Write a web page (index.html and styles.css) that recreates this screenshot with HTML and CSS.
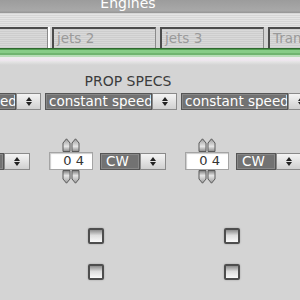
FILE: index.html
```html
<!DOCTYPE html>
<html lang="en">
<head>
  <meta charset="UTF-8">
  <title>Engines</title>
  <link rel="stylesheet" href="styles.css">
</head>
<body>
  <div class="titlebar"><span class="title">Engines</span></div>
  <div class="strip"></div>
  <div class="tabs">
    <div class="tab">jets 1</div>
    <div class="tab">jets 2</div>
    <div class="tab">jets 3</div>
    <div class="tab">Transmission</div>
  </div>
  <div class="accent"></div>
  <div class="sheen"></div>

  <h2 class="heading">PROP SPECS</h2>

  <!-- governor type, one per engine -->
  <div class="select-row">
    <div class="select">
      <div class="box">constant speed</div>
      <div class="btn"><svg width="6" height="9" viewBox="0 0 6 9"><path d="M0 4L3 0L6 4ZM0 5H6L3 9Z" fill="#222"/></svg></div>
    </div>
    <div class="select">
      <div class="box">constant speed</div>
      <div class="btn"><svg width="6" height="9" viewBox="0 0 6 9"><path d="M0 4L3 0L6 4ZM0 5H6L3 9Z" fill="#222"/></svg></div>
    </div>
    <div class="select">
      <div class="box">constant speed</div>
      <div class="btn"><svg width="6" height="9" viewBox="0 0 6 9"><path d="M0 4L3 0L6 4ZM0 5H6L3 9Z" fill="#222"/></svg></div>
    </div>
  </div>

  <!-- blade count + rotation -->
  <div class="prop-row">
    <div class="prop">
      <div class="num">
        <div class="arrows">
          <svg width="9" height="14" viewBox="0 0 9 14"><path d="M1 13.5V5L4.5 0.8L8 5V13.5Z" fill="url(#ga)" stroke="#5a5a5a"/></svg>
          <svg width="9" height="14" viewBox="0 0 9 14"><path d="M1 13.5V5L4.5 0.8L8 5V13.5Z" fill="url(#ga)" stroke="#5a5a5a"/></svg>
        </div>
        <div class="field">0 4</div>
        <div class="arrows">
          <svg width="9" height="14" viewBox="0 0 9 14"><path d="M1 0.5V9L4.5 13.2L8 9V0.5Z" fill="url(#gb)" stroke="#5a5a5a"/></svg>
          <svg width="9" height="14" viewBox="0 0 9 14"><path d="M1 0.5V9L4.5 13.2L8 9V0.5Z" fill="url(#gb)" stroke="#5a5a5a"/></svg>
        </div>
      </div>
      <div class="select small">
        <div class="box">CW</div>
        <div class="btn"><svg width="6" height="9" viewBox="0 0 6 9"><path d="M0 4L3 0L6 4ZM0 5H6L3 9Z" fill="#222"/></svg></div>
      </div>
    </div>
    <div class="prop">
      <div class="num">
        <div class="arrows">
          <svg width="9" height="14" viewBox="0 0 9 14"><path d="M1 13.5V5L4.5 0.8L8 5V13.5Z" fill="url(#ga)" stroke="#5a5a5a"/></svg>
          <svg width="9" height="14" viewBox="0 0 9 14"><path d="M1 13.5V5L4.5 0.8L8 5V13.5Z" fill="url(#ga)" stroke="#5a5a5a"/></svg>
        </div>
        <div class="field">0 4</div>
        <div class="arrows">
          <svg width="9" height="14" viewBox="0 0 9 14"><path d="M1 0.5V9L4.5 13.2L8 9V0.5Z" fill="url(#gb)" stroke="#5a5a5a"/></svg>
          <svg width="9" height="14" viewBox="0 0 9 14"><path d="M1 0.5V9L4.5 13.2L8 9V0.5Z" fill="url(#gb)" stroke="#5a5a5a"/></svg>
        </div>
      </div>
      <div class="select small">
        <div class="box">CW</div>
        <div class="btn"><svg width="6" height="9" viewBox="0 0 6 9"><path d="M0 4L3 0L6 4ZM0 5H6L3 9Z" fill="#222"/></svg></div>
      </div>
    </div>
    <div class="prop">
      <div class="num">
        <div class="arrows">
          <svg width="9" height="14" viewBox="0 0 9 14"><path d="M1 13.5V5L4.5 0.8L8 5V13.5Z" fill="url(#ga)" stroke="#5a5a5a"/></svg>
          <svg width="9" height="14" viewBox="0 0 9 14"><path d="M1 13.5V5L4.5 0.8L8 5V13.5Z" fill="url(#ga)" stroke="#5a5a5a"/></svg>
        </div>
        <div class="field">0 4</div>
        <div class="arrows">
          <svg width="9" height="14" viewBox="0 0 9 14"><path d="M1 0.5V9L4.5 13.2L8 9V0.5Z" fill="url(#gb)" stroke="#5a5a5a"/></svg>
          <svg width="9" height="14" viewBox="0 0 9 14"><path d="M1 0.5V9L4.5 13.2L8 9V0.5Z" fill="url(#gb)" stroke="#5a5a5a"/></svg>
        </div>
      </div>
      <div class="select small">
        <div class="box">CW</div>
        <div class="btn"><svg width="6" height="9" viewBox="0 0 6 9"><path d="M0 4L3 0L6 4ZM0 5H6L3 9Z" fill="#222"/></svg></div>
      </div>
    </div>
  </div>

  <div class="checks">
    <span class="check"></span><span class="check"></span><span class="check"></span>
  </div>
  <div class="checks second">
    <span class="check"></span><span class="check"></span><span class="check"></span>
  </div>

  <svg class="defs" width="0" height="0">
    <defs>
      <linearGradient id="ga" x1="0" y1="0" x2="0" y2="1">
        <stop offset="0" stop-color="#9a9a9a"/>
        <stop offset="0.6" stop-color="#e6e6e6"/>
        <stop offset="1" stop-color="#8a8a8a"/>
      </linearGradient>
      <linearGradient id="gb" x1="0" y1="0" x2="0" y2="1">
        <stop offset="0" stop-color="#7a7a7a"/>
        <stop offset="0.4" stop-color="#e6e6e6"/>
        <stop offset="1" stop-color="#9a9a9a"/>
      </linearGradient>
    </defs>
  </svg>
</body>
</html>
```

FILE: styles.css
```css
html, body {
  margin: 0;
  padding: 0;
}
body {
  width: 300px;
  height: 300px;
  overflow: hidden;
  background: #d4d4d4;
  font-family: 'DejaVu Sans', Verdana, sans-serif;
  color: #333;
}
/* --- header --- */
.titlebar {
  height: 13px;
  overflow: hidden;
  padding-right: 44px;
  text-align: center;
  background: linear-gradient(#9c9c9c, #a8a8a8 80%, #959595);
}
.title {
  display: block;
  margin-top: -5px;
  font-size: 14px;
  line-height: 17px;
  color: #fff;
}
.strip {
  height: 14px;
  background: repeating-linear-gradient(#d6d6d6 0 1px, #e4e4e4 1px 2px);
}
.tabs {
  display: flex;
  gap: 4px;
  height: 21px;
  margin-left: -56px;
}
.tab {
  flex: 0 0 104px;
  box-sizing: border-box;
  border-top: 2px solid #4c4c4c;
  border-left: 2px solid #4c4c4c;
  border-right: 1px solid #8a8a8a;
  background: repeating-linear-gradient(#cdcdcd 0 1px, #d9d9d9 1px 2px);
  color: #9a9a9a;
  font-size: 13.5px;
  line-height: 19px;
  padding-left: 3px;
  white-space: nowrap;
  overflow: hidden;
}
.tab:first-child {
  box-shadow: 2px 0 0 #fff;
}
.accent {
  height: 9px;
  background: linear-gradient(#2f6a2f 0 1px, #4f9a4f 1px 2px, #86cc86 2px 5px, #6fb46f 5px 7px, #b6dcb6 7px);
}
.sheen {
  height: 8px;
  background: linear-gradient(#ececec, #efe6ef 40%, #e4e4e4 60%, #d4d4d4);
}
/* --- prop specs --- */
.heading {
  margin: 8px 0 0;
  padding-right: 44px;
  text-align: center;
  font-size: 14px;
  line-height: 17px;
  font-weight: normal;
  color: #3c3c3c;
}
.select-row {
  display: flex;
  gap: 4px;
  margin: 3px 0 0 -91px;
}
.select {
  display: flex;
  flex-shrink: 0;
}
.select .box {
  width: 107px;
  height: 17px;
  box-sizing: border-box;
  border: 1px solid #555;
  box-shadow: inset 0 0 0 1px #888;
  background: #727272;
  color: #fff;
  font-size: 13.5px;
  line-height: 15px;
  padding-left: 3px;
  white-space: nowrap;
  overflow: hidden;
}
.select .btn {
  width: 25px;
  height: 17px;
  box-sizing: border-box;
  border: 1px solid #8a8a8a;
  background: linear-gradient(#f4f4f4, #d0d0d0);
  display: flex;
  align-items: center;
  justify-content: center;
}
.select.small .box {
  width: 40px;
  padding-left: 5px;
}
.select.small .btn {
  width: 26px;
}
.prop-row {
  display: flex;
  gap: 19px;
  margin: 28px 0 0 -87px;
}
.prop {
  display: flex;
  align-items: center;
  gap: 7px;
  flex-shrink: 0;
}
.num {
  width: 44px;
  display: flex;
  flex-direction: column;
  align-items: center;
}
.arrows {
  display: flex;
  height: 14px;
}
.arrows svg {
  display: block;
}
.field {
  width: 44px;
  height: 18px;
  box-sizing: border-box;
  border: 1px solid #a4a4a4;
  background: #fff;
  box-shadow: inset 1px 1px 1px #ccc;
  text-align: right;
  padding-right: 8px;
  font-size: 13px;
  line-height: 16px;
  color: #333;
}
.checks {
  display: flex;
  gap: 120px;
  margin: 44px 0 0 -48px;
}
.checks.second {
  margin-top: 20px;
}
.check {
  flex-shrink: 0;
  width: 16px;
  height: 16px;
  box-sizing: border-box;
  border: 2px solid #4e4e4e;
  border-radius: 2px;
  background: linear-gradient(#8c8c8c, #dedede 45%, #fafafa);
  box-shadow: 0 0 2px rgba(0,0,0,.25);
}
.defs {
  display: block;
}
```
